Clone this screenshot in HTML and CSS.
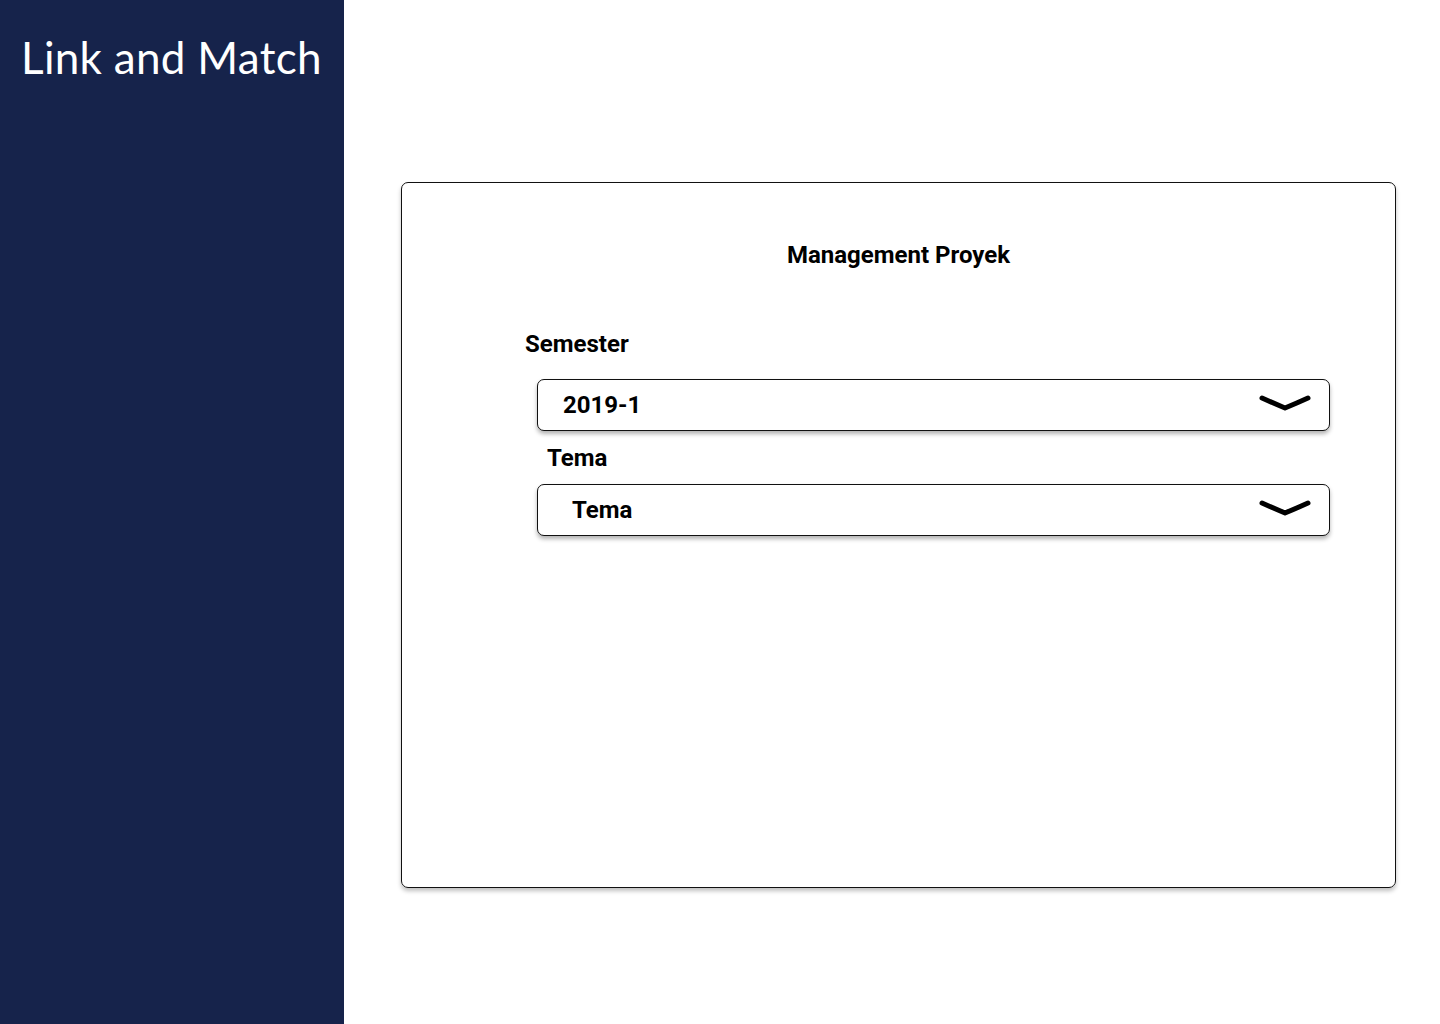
FILE: index.html
```html
<!DOCTYPE html>
<html>
<head>
<meta charset="utf-8">
<link rel="stylesheet" href="styles.css">
</head>
<body>
<div class="page">
  <aside class="sidebar">
    <h1 class="brand">Link and Match</h1>
  </aside>
  <main class="main">
    <section class="card">
      <h2 class="card-title">Management Proyek</h2>
      <div class="form">
        <label class="label label-semester">Semester</label>
        <div class="select select-semester">
          <span class="select-value">2019-1</span>
          <svg class="chevron" width="52" height="20" viewBox="0 0 52 20"><path d="M3 5 Q14 10 26 15 Q38 10 49 5" fill="none" stroke="#000" stroke-width="5" stroke-linecap="round" stroke-linejoin="round"/></svg>
        </div>
        <label class="label label-tema">Tema</label>
        <div class="select select-tema">
          <span class="select-value">Tema</span>
          <svg class="chevron" width="52" height="20" viewBox="0 0 52 20"><path d="M3 5 Q14 10 26 15 Q38 10 49 5" fill="none" stroke="#000" stroke-width="5" stroke-linecap="round" stroke-linejoin="round"/></svg>
        </div>
      </div>
    </section>
  </main>
</div>
</body>
</html>
```
FILE: styles.css
```css
* { box-sizing: border-box; }
html, body { margin: 0; padding: 0; }
body { background: #fff; font-family: Roboto, "Liberation Sans", sans-serif; color: #000; }
.page { display: flex; width: 1440px; height: 1024px; }
.sidebar { width: 344px; flex: none; background: #16234b; padding-top: 30px; }
.brand {
  margin: 0; padding-left: 21px;
  font-family: Lato, "Open Sans", sans-serif; font-weight: 400;
  font-size: 44px; line-height: 54px; color: #fff; letter-spacing: 0.3px;
}
.main { flex: 1; padding: 182px 44px 0 57px; }
.card {
  width: 995px; height: 706px;
  border: 1.5px solid #111; border-radius: 7px;
  box-shadow: 0 3px 4px rgba(0,0,0,0.25);
  padding-top: 58px;
}
.card-title {
  margin: 0; text-align: center; font-size: 24px; font-weight: 700;
  line-height: 28px;
}
.form { padding: 61px 65px 0 123px; display: flex; flex-direction: column; }
.label { font-size: 24px; font-weight: 700; line-height: 28px; display: block; }
.label-semester { margin-bottom: 21px; }
.label-tema { margin: 13px 0 12px 22px; }
.select {
  margin-left: 12px; height: 52px;
  border: 1.5px solid #111; border-radius: 7px;
  box-shadow: 0 3px 4px rgba(0,0,0,0.3);
  display: flex; align-items: center; justify-content: space-between;
  padding: 0 18px 0 25px; background: #fff;
}
.select-tema { padding-left: 34px; }
.select-value { font-size: 24px; font-weight: 700; line-height: 28px; }
.chevron { display: block; margin-top: -4px; }
```
